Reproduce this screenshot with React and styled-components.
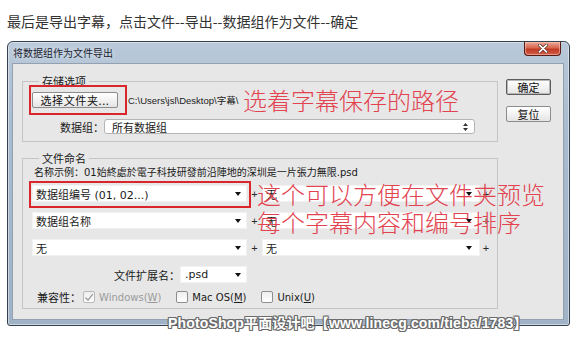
import React from 'react';
import styled, { createGlobalStyle } from 'styled-components';

const Global = createGlobalStyle`
  html, body { margin: 0; padding: 0; background: #ffffff; }
  body { font-family: "Noto Sans CJK SC", sans-serif; }
  * { box-sizing: border-box; }
`;

const Page = styled.div`
  position: relative;
  width: 576px;
  height: 344px;
  overflow: hidden;
  padding-top: 12px;
`;

const Caption = styled.div`
  margin-left: 7px;
  font-size: 14px;
  line-height: 19px;
  color: #333333;
  font-family: "Noto Sans CJK SC", sans-serif;
  white-space: nowrap;
`;

const Dialog = styled.div`
  margin: 10px 0 0 7px;
  width: 563px;
  height: 285px;
  border: 1px solid #33404e;
  border-radius: 6px 6px 3px 3px;
  background: linear-gradient(180deg, #b9c9da 0%, #a9bbce 30%, #9fb2c6 100%);
  box-shadow: inset 0 0 0 1px rgba(255, 255, 255, 0.45);
  padding: 0 5px 5px 4px;
  display: flex;
  flex-direction: column;
`;

const TitleBar = styled.div`
  height: 21px;
  display: flex;
  align-items: flex-start;
  flex-shrink: 0;
`;

const Title = styled.div`
  margin: 4px 0 0 1px;
  font-size: 10px;
  line-height: 13px;
  color: #1b2330;
  font-family: "Noto Sans CJK SC", sans-serif;
  text-shadow: 0 0 6px rgba(255, 255, 255, 0.9);
`;

const CloseButton = styled.div`
  margin-left: auto;
  margin-right: 3px;
  width: 37px;
  height: 14px;
  border: 1px solid #5a1b12;
  border-top: none;
  border-radius: 0 0 4px 4px;
  background: linear-gradient(180deg, #eba897 0%, #d86650 45%, #c13a22 55%, #d0604a 100%);
  box-shadow: inset 0 0 0 1px rgba(255, 210, 200, 0.5);
  display: flex;
  align-items: center;
  justify-content: center;
`;

const Client = styled.div`
  flex: 1;
  background: #e7e7e7;
  border: 1px solid #93a1b0;
  display: flex;
  align-items: flex-start;
  padding: 10px 0 0 9px;
  font-family: "DejaVu Sans", "Noto Sans CJK SC", sans-serif;
  font-size: 11px;
  color: #1a1a1a;
`;

const MainColumn = styled.div`
  width: 476px;
  display: flex;
  flex-direction: column;
`;

const GroupBox = styled.fieldset`
  margin: ${p => p.$gap || 0}px 0 0 0;
  padding: ${p => p.$pt}px 9px ${p => p.$pb}px 9px;
  border: 1px solid #c4c4c4;
  min-width: 0;
`;

const Legend = styled.legend`
  margin-left: 7px;
  padding: 0 3px;
  font-size: 11px;
  line-height: 14px;
  font-family: "Noto Sans CJK SC", sans-serif;
  color: #1a1a1a;
`;

const Row = styled.div`
  display: flex;
  align-items: center;
  height: ${p => p.$h}px;
  margin-top: ${p => p.$mt || 0}px;
  margin-left: ${p => p.$ml || 0}px;
`;

const Highlight = styled.span`
  position: relative;
  display: inline-flex;
  &::after {
    content: '';
    position: absolute;
    left: ${p => p.$l}px;
    right: ${p => p.$r}px;
    top: ${p => p.$t}px;
    bottom: ${p => p.$b}px;
    border: 2px solid #d8262c;
    pointer-events: none;
  }
`;

const PushButton = styled.div`
  width: ${p => p.$w}px;
  height: 16px;
  border: 1px solid ${p => (p.$default ? '#5c5c5c' : '#8c8c8c')};
  box-shadow: ${p => (p.$default ? 'inset 0 0 0 1px #b8b8b8' : 'none')};
  border-radius: 2px;
  background: linear-gradient(180deg, #ffffff 0%, #f3f3f3 50%, #e4e4e4 100%);
  display: flex;
  align-items: center;
  justify-content: center;
  font-family: "Noto Sans CJK SC", sans-serif;
  font-size: 11px;
  line-height: 14px;
  letter-spacing: ${p => p.$ls || 0}px;
  color: #111;
`;

const PathText = styled.span`
  margin-left: 10px;
  font-family: "Liberation Sans", "Noto Sans CJK SC", sans-serif;
  font-size: 9.5px;
  color: #222;
  white-space: nowrap;
`;

const Label = styled.span`
  width: ${p => p.$w}px;
  text-align: right;
  font-family: "Noto Sans CJK SC", sans-serif;
  font-size: 11px;
  white-space: nowrap;
  flex-shrink: 0;
`;

const Select = styled.div`
  width: ${p => p.$w}px;
  height: ${p => p.$h || 17}px;
  flex-shrink: 0;
  background: #ffffff;
  border: 1px solid ${p => (p.$framed ? '#b4b4b4' : '#f2f2f2')};
  border-radius: ${p => (p.$framed ? 3 : 0)}px;
  display: flex;
  align-items: center;
  justify-content: space-between;
  padding: 0 ${p => p.$pr || 5}px 0 ${p => p.$pl || 3}px;
  font-size: 11px;
  white-space: nowrap;
  overflow: hidden;
`;

const Arrow = styled.span`
  width: 0;
  height: 0;
  border-left: 3.5px solid transparent;
  border-right: 3.5px solid transparent;
  border-top: 4px solid #111;
  flex-shrink: 0;
`;

const Plus = styled.span`
  width: ${p => p.$w}px;
  text-align: center;
  font-family: "Liberation Sans", sans-serif;
  font-size: 11px;
  color: #2a2a2a;
  flex-shrink: 0;
`;

const Example = styled.div`
  margin-left: 2px;
  height: 14px;
  line-height: 14px;
  font-size: 10px;
  white-space: nowrap;
`;

const Check = styled.span`
  width: 12px;
  height: 12px;
  border: 1px solid ${p => (p.$disabled ? '#b9b9b9' : '#8e8e8e')};
  border-radius: 2px;
  background: linear-gradient(180deg, #eeeeee, #ffffff);
  display: inline-flex;
  align-items: center;
  justify-content: center;
  margin-left: ${p => p.$ml}px;
  flex-shrink: 0;
`;

const CheckText = styled.span`
  margin-left: 4px;
  font-size: 10px;
  color: ${p => (p.$disabled ? '#9a9a9a' : '#1a1a1a')};
  white-space: nowrap;
`;

const SideColumn = styled.div`
  margin: 5px 0 0 8px;
  display: flex;
  flex-direction: column;
  gap: 11px;
`;

const Annotation = styled.div`
  position: absolute;
  left: ${p => p.$x}px;
  top: ${p => p.$y}px;
  font-family: "Noto Sans CJK SC", sans-serif;
  font-weight: 300;
  font-size: 24px;
  line-height: 24px;
  color: #e2434f;
  white-space: nowrap;
  pointer-events: none;
`;

const Watermark = styled.div`
  position: absolute;
  left: 168px;
  top: 315px;
  font-family: "Liberation Sans", "Noto Sans CJK SC", sans-serif;
  font-weight: bold;
  font-size: 14px;
  line-height: 17px;
  letter-spacing: 0.15px;
  color: #ffffff;
  white-space: nowrap;
  text-shadow:
    1px 0 0 #6b6b6b, -1px 0 0 #6b6b6b, 0 1px 0 #6b6b6b, 0 -1px 0 #6b6b6b,
    1px 1px 0 #6b6b6b, -1px -1px 0 #6b6b6b, 1px -1px 0 #6b6b6b, -1px 1px 0 #6b6b6b;
`;

const UpDown = () => (
  <svg width="5" height="8" viewBox="0 0 5 8">
    <path d="M2.5 0 L5 3 L0 3 Z M2.5 8 L5 5 L0 5 Z" fill="#333" />
  </svg>
);

const CloseX = () => (
  <svg width="10" height="9" viewBox="0 0 10 9">
    <path d="M1.5 1.2 L8.5 7.8 M8.5 1.2 L1.5 7.8" stroke="#5a2a22" strokeWidth="3.2" strokeLinecap="round" />
    <path d="M1.5 1.2 L8.5 7.8 M8.5 1.2 L1.5 7.8" stroke="#ffffff" strokeWidth="1.8" strokeLinecap="round" />
  </svg>
);

const Tick = () => (
  <svg width="10" height="9" viewBox="0 0 10 9">
    <path d="M1.5 4.5 L4 7.2 L8.8 1.2" stroke="#9c9c9c" strokeWidth="1.3" fill="none" />
  </svg>
);

const NameRow = ({ first, a, b, mt }) => (
  <Row $h={17} $mt={mt}>
    {first}
    {!first && (
      <Select $w={215}>
        <span>{a}</span>
        <Arrow />
      </Select>
    )}
    <Plus $w={15}>+</Plus>
    <Select $w={218} $pr={7}>
      <span>{b}</span>
      <Arrow />
    </Select>
    <Plus $w={12}>+</Plus>
  </Row>
);

export default function App() {
  return (
    <Page>
      <Global />
      <Caption>最后是导出字幕，点击文件--导出--数据组作为文件--确定</Caption>
      <Dialog>
        <TitleBar>
          <Title>将数据组作为文件导出</Title>
          <CloseButton>
            <CloseX />
          </CloseButton>
        </TitleBar>
        <Client>
          <MainColumn>
            <GroupBox $pt={4} $pb={7}>
              <Legend>存储选项</Legend>
              <Row $h={16}>
                <Highlight $l={-3} $r={-9} $t={-7} $b={-7}>
                  <PushButton $w={86} $ls={0.6}>选择文件夹...</PushButton>
                </Highlight>
                <PathText>C:\Users\jsl\Desktop\字幕\</PathText>
              </Row>
              <Row $h={15} $mt={11}>
                <Label $w={72}>数据组：</Label>
                <Select $w={371} $h={15} $framed $pl={7} $pr={6}>
                  <span>所有数据组</span>
                  <UpDown />
                </Select>
              </Row>
            </GroupBox>
            <GroupBox $gap={9} $pt={1} $pb={4}>
              <Legend>文件命名</Legend>
              <Example>名称示例：01始終處於電子科技研發前沿陣地的深圳是一片張力無限.psd</Example>
              <NameRow
                mt={5}
                b="无"
                first={
                  <Highlight $l={-3} $r={-4} $t={-4} $b={-6}>
                    <Select $w={215}>
                      <span>数据组编号 (01, 02...)</span>
                      <Arrow />
                    </Select>
                  </Highlight>
                }
              />
              <NameRow mt={10} a="数据组名称" b="无" />
              <NameRow mt={10} a="无" b="无" />
              <Row $h={17} $mt={10}>
                <Label $w={148}>文件扩展名：</Label>
                <Select $w={67} $pl={4}>
                  <span>.psd</span>
                  <Arrow />
                </Select>
              </Row>
              <Row $h={14} $mt={7} $ml={3}>
                <Label $w={46}>兼容性：</Label>
                <Check $ml={2} $disabled>
                  <Tick />
                </Check>
                <CheckText $disabled>
                  Windows(<u>W</u>)
                </CheckText>
                <Check $ml={15} />
                <CheckText>
                  Mac OS(<u>M</u>)
                </CheckText>
                <Check $ml={15} />
                <CheckText>
                  Unix(<u>U</u>)
                </CheckText>
              </Row>
            </GroupBox>
          </MainColumn>
          <SideColumn>
            <PushButton $w={45} $default>确定</PushButton>
            <PushButton $w={45}>复位</PushButton>
          </SideColumn>
        </Client>
      </Dialog>
      <Annotation $x={243} $y={88}>选着字幕保存的路径</Annotation>
      <Annotation $x={257} $y={182}>这个可以方便在文件夹预览</Annotation>
      <Annotation $x={257} $y={210}>每个字幕内容和编号排序</Annotation>
      <Watermark>PhotoShop平面设计吧【www.linecg.com/tieba/1783】</Watermark>
    </Page>
  );
}
